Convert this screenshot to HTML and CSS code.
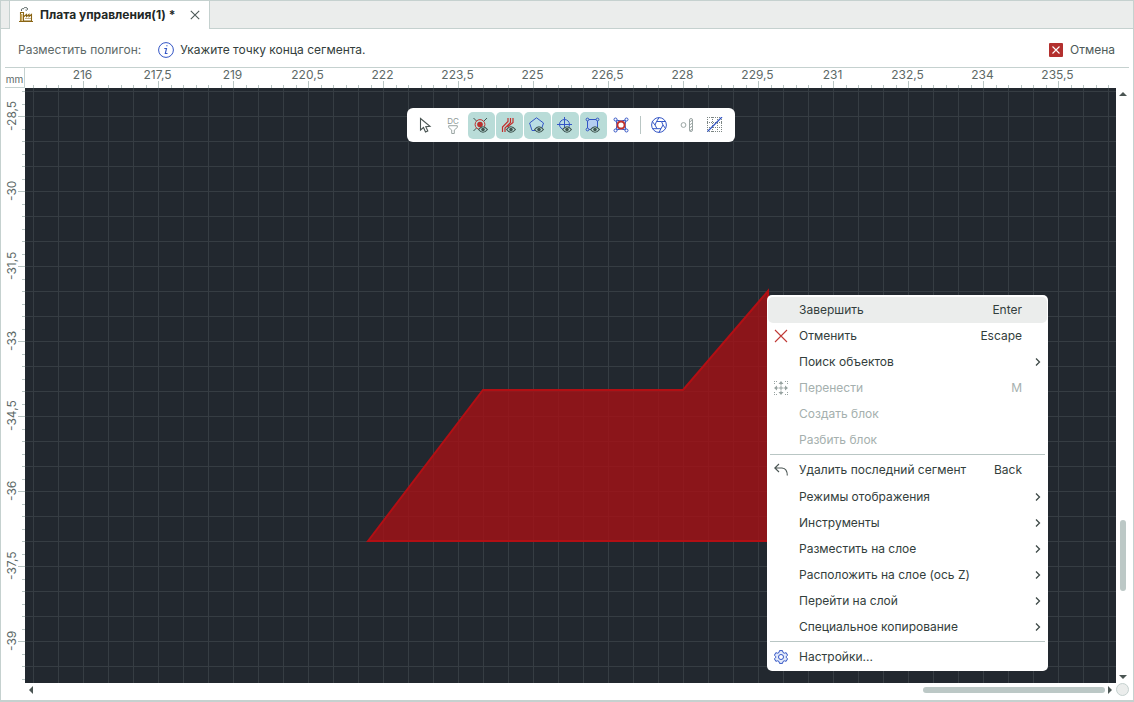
FILE: index.html
```html
<!DOCTYPE html>
<html lang="ru">
<head>
<meta charset="utf-8">
<title>Плата управления(1)</title>
<link rel="stylesheet" href="styles.css">
</head>
<body>
<svg class="defs" aria-hidden="true">
  <symbol id="eye" viewBox="0 0 10 7"><path d="M.6 3.500Q5-2 9.400 3.500Q5 9 .6 3.500Z" fill="#b9dcd8" stroke="#3f5550" stroke-width="1.200"/><circle cx="5" cy="3.500" r="1.800" fill="#3f5550"/></symbol>
  <symbol id="chev" viewBox="0 0 6 8"><path d="M1 .5 4.500 4 1 7.500" fill="none" stroke="#3f4a48" stroke-width="1.300"/></symbol>
</svg>
<div class="window">
  <header class="tabs">
    <div class="tab">
      <svg class="tab-icon" viewBox="0 0 16 16" fill="none">
        <path d="M1 14.500H15M2.500 14V5.500H5.500V14M5.500 14H13.500V7.500L11 9.500V7.500L8.500 9.500V7.500L6 9.500" stroke="#8a6514" stroke-width="1.100"/>
        <path d="M2.500 7h2v7h-2z" fill="#c9a95c"/>
        <path d="M7.500 11.500h1m1 0h1m1 0h1" stroke="#8a6514"/>
        <path d="M3.500 4C3 2 4 1.300 5.500 1.800 5.500.2 9.500-.2 9.500 2 9.500 3 8.500 3.700 7.500 3" stroke="#4d5a58"/>
      </svg>
      <span class="tab-title">Плата управления(1) *</span>
      <button class="close" aria-label="Закрыть"><svg viewBox="0 0 10 10"><path d="M.8.800 9.200 9.200M9.200.800.8 9.200" stroke="#4d5a58" stroke-width="1.100"/></svg></button>
    </div>
  </header>
  <div class="prompt">
    <span class="mode">Разместить полигон:</span>
    <svg class="info" viewBox="0 0 16 16" fill="none" stroke="#3355c5"><circle cx="8" cy="8" r="7.400"/><path d="M6.300 6.500H8.500L7.300 11.500H9.500M8.300 3.700h1.200" stroke-width="1.100"/></svg>
    <span class="hint">Укажите точку конца сегмента.</span>
    <button class="cancel"><svg viewBox="0 0 14 14"><rect width="14" height="14" rx="1" fill="#b3302e"/><path d="M3.500 3.500l7 7M10.500 3.500l-7 7" stroke="#fff" stroke-width="1.100"/></svg>Отмена</button>
  </div>
  <main class="board">
    <div class="unit">mm</div>
    <div class="ruler-x">
      <span>216</span><span>217,5</span><span>219</span><span>220,5</span><span>222</span><span>223,5</span><span>225</span><span>226,5</span><span>228</span><span>229,5</span><span>231</span><span>232,5</span><span>234</span><span>235,5</span>
      <svg class="ticks"><defs><pattern id="tx" x="-17" width="75" height="20" patternUnits="userSpaceOnUse"><path d="M.5 13v7M13.500 17v3M25.500 17v3M38.500 17v3M50.500 17v3M63.500 17v3" stroke="#b9c6c4"/></pattern></defs><rect width="100%" height="100%" fill="url(#tx)"/></svg>
    </div>
    <div class="corner"></div>
    <div class="ruler-y">
      <span>-28,5</span><span>-30</span><span>-31,5</span><span>-33</span><span>-34,5</span><span>-36</span><span>-37,5</span><span>-39</span>
      <svg class="ticks"><defs><pattern id="ty" y="-47" width="20" height="75" patternUnits="userSpaceOnUse"><path d="M13 .5h7M17 13.500h3M17 25.500h3M17 38.500h3M17 50.500h3M17 63.500h3" stroke="#b9c6c4"/></pattern></defs><rect width="100%" height="100%" fill="url(#ty)"/></svg>
    </div>
    <div class="canvas">
      <svg class="drawing">
        <defs><pattern id="grid" x="8" y="3" width="25" height="25" patternUnits="userSpaceOnUse"><path d="M.5 0V25M0 .5H25" stroke="#363d43"/></pattern></defs>
        <rect width="100%" height="100%" fill="url(#grid)"/>
        <path d="M343 453 458 302H658L743 203V453Z" fill="#a61015" fill-opacity=".8" stroke="#b20f14" stroke-width="2"/>
      </svg>
      <div class="toolbar" role="toolbar">
        <button class="tool" aria-label="Выбор"><svg viewBox="0 0 16 16"><path d="M3.500 1.500V13L6.500 10.500 8.500 15 10.800 14 8.800 9.700 13 9.300Z" fill="#fff" stroke="#4a5553" stroke-width="1.100"/></svg></button>
        <button class="tool dc" aria-label="DC фильтр"><span>DC</span><svg viewBox="0 0 10 9"><path d="M.7.700H9.300V2.500L6.300 5V8.500H3.700V5L.7 2.500Z" fill="none" stroke="#9aa5a3"/></svg></button>
        <button class="tool on" aria-label="Площадки"><svg viewBox="0 0 16 16"><path d="M.5 1l3 3M14 1l-3 3M.5 14l3-3" stroke="#3f5550"/><circle cx="7" cy="7.500" r="4.900" fill="none" stroke="#c22f2c"/><circle cx="7" cy="7.500" r="2.800" fill="#b9302e"/><use href="#eye" x="5" y="9" width="10" height="7"/></svg></button>
        <button class="tool on" aria-label="Проводники"><svg viewBox="0 0 16 16"><path d="M1.500 15V10L7 4.500V1M4 15V11L9.500 5.500V1M6.500 10 12 5.500V1" fill="none" stroke="#c22f2c" stroke-width="1.200"/><use href="#eye" x="5" y="9" width="10" height="7"/></svg></button>
        <button class="tool on" aria-label="Полигоны"><svg viewBox="0 0 16 16"><path d="M7.500.8 14.500 6 12 13.500H3L.6 6Z" fill="#b9dde4" stroke="#3355c5"/><use href="#eye" x="5" y="9" width="10" height="7"/></svg></button>
        <button class="tool on" aria-label="Отверстия"><svg viewBox="0 0 16 16"><circle cx="7.500" cy="7.500" r="5" fill="#b9dde4" stroke="#3355c5"/><path d="M7.500 0V15M0 7.500H15" stroke="#3355c5"/><use href="#eye" x="5" y="9" width="10" height="7"/></svg></button>
        <button class="tool on" aria-label="Области"><svg viewBox="0 0 16 16"><path d="M2.500 2.500H12.500V12.500H2.500Z" fill="#b5cdf0" stroke="#3355c5"/><g fill="#b9dcd8" stroke="#3355c5"><circle cx="2.500" cy="2.500" r="1.400"/><circle cx="12.500" cy="2.500" r="1.400"/><circle cx="2.500" cy="12.500" r="1.400"/></g><use href="#eye" x="5" y="9" width="10" height="7"/></svg></button>
        <button class="tool" aria-label="Привязка"><svg viewBox="0 0 16 16" fill="none"><path d="M3 3Q8 5 13 3Q11 8 13 13Q8 11 3 13Q5 8 3 3Z" fill="#c5d2f2" stroke="#3355c5"/><g fill="#fff" stroke="#3355c5"><circle cx="2.500" cy="2.500" r="1.500"/><circle cx="13.500" cy="2.500" r="1.500"/><circle cx="2.500" cy="13.500" r="1.500"/><circle cx="13.500" cy="13.500" r="1.500"/></g><circle cx="8" cy="8" r="3.600" fill="#fff" stroke="#c0302d" stroke-width="2"/></svg></button>
        <i class="tool-sep"></i>
        <button class="tool" aria-label="Диафрагма"><svg viewBox="0 0 16 16" fill="none" stroke="#3355c5"><circle cx="8" cy="8" r="7.400"/><path d="M5.500 4.500H10.500L12 8 10 11.700H6L4 8ZM5.500 4.500 8 .7M10.500 4.500 14.300 4.500M12 8 14.500 11.500M10 11.700 8 15.300M6 11.700H1.700M4 8 1.300 4.500"/></svg></button>
        <button class="tool" aria-label="Зазор"><svg viewBox="0 0 16 16" fill="none" stroke="#9aa5a3"><circle cx="4.500" cy="8" r="2.400"/><rect x="10.500" y="1.500" width="3" height="13" rx="1.500"/><path d="M10.500 5l3-2M10.500 8l3-2M10.500 11l3-2M10.500 14l3-2"/></svg></button>
        <button class="tool" aria-label="Сетка"><svg viewBox="0 0 16 16" fill="none"><path d="M0 .5H16M0 14.500H16M.5 0V16M14.500 0V16M0 5.500H16M0 10.500H16M5.500 0V16M10.500 0V16" stroke="#7b8583" stroke-dasharray="1 1"/><path d="M.5 14.500 15 0" stroke="#3355c5" stroke-width="1.300"/></svg></button>
      </div>
      <div class="menu" role="menu">
        <button class="item current" role="menuitem"><span class="icon"></span><span>Завершить</span><kbd>Enter</kbd></button>
        <button class="item" role="menuitem"><span class="icon"><svg viewBox="0 0 14 14"><path d="M1 1l12 12M13 1 1 13" stroke="#c03a36" stroke-width="1.100"/></svg></span><span>Отменить</span><kbd>Escape</kbd></button>
        <button class="item" role="menuitem"><span class="icon"></span><span>Поиск объектов</span><svg class="more"><use href="#chev"/></svg></button>
        <button class="item" role="menuitem" disabled><span class="icon"><svg viewBox="0 0 14 14" fill="none" stroke="#98a3a1"><path d="M0 .5h1m1 0h1m8 0h1m1 0h1M0 13.500h1m1 0h1m8 0h1m1 0h1M0 2.500h1m12 0h1M0 11.500h1m12 0h1"/><path d="M7 2v2.500M7 9.500V12M2 7h2.500M9.500 7H12"/><path d="M7 0 9.500 3h-5zM7 14l2.500-3h-5zM0 7l3-2.500v5zM14 7l-3-2.500v5z" fill="#98a3a1" stroke="none"/><path d="M6 6h2v2H6z"/></svg></span><span>Перенести</span><kbd>M</kbd></button>
        <button class="item" role="menuitem" disabled><span class="icon"></span><span>Создать блок</span></button>
        <button class="item" role="menuitem" disabled><span class="icon"></span><span>Разбить блок</span></button>
        <hr>
        <button class="item tall" role="menuitem"><span class="icon"><svg viewBox="0 0 14 14" fill="none" stroke="#4a5553" stroke-width="1.100"><path d="M5 1 .8 5 5 9M.8 5H8Q13.300 5.500 13.300 12.500"/></svg></span><span>Удалить последний сегмент</span><kbd>Back</kbd></button>
        <button class="item" role="menuitem"><span class="icon"></span><span>Режимы отображения</span><svg class="more"><use href="#chev"/></svg></button>
        <button class="item" role="menuitem"><span class="icon"></span><span>Инструменты</span><svg class="more"><use href="#chev"/></svg></button>
        <button class="item" role="menuitem"><span class="icon"></span><span>Разместить на слое</span><svg class="more"><use href="#chev"/></svg></button>
        <button class="item" role="menuitem"><span class="icon"></span><span>Расположить на слое (ось Z)</span><svg class="more"><use href="#chev"/></svg></button>
        <button class="item" role="menuitem"><span class="icon"></span><span>Перейти на слой</span><svg class="more"><use href="#chev"/></svg></button>
        <button class="item" role="menuitem"><span class="icon"></span><span>Специальное копирование</span><svg class="more"><use href="#chev"/></svg></button>
        <hr>
        <button class="item" role="menuitem"><span class="icon"><svg viewBox="0 0 14 14" fill="#e3eafa" stroke="#3355c5"><path d="M5.500.6H8.500L9 2.500 10.300 3.200 12.200 2.700 13.600 5.300 12.200 6.500V7.500L13.600 8.700 12.200 11.300 10.300 10.800 9 11.500 8.500 13.400H5.500L5 11.500 3.700 10.800 1.800 11.300.4 8.700 1.800 7.500V6.500L.4 5.300 1.800 2.700 3.700 3.200 5 2.500Z"/><circle cx="7" cy="7" r="2.500" fill="#fff"/></svg></span><span>Настройки...</span></button>
      </div>
    </div>
    <div class="scroll-y">
      <svg class="up" viewBox="0 0 8 4"><path d="M0 4 4 0 8 4Z"/></svg><i class="thumb"></i><svg class="down" viewBox="0 0 8 4"><path d="M0 0 4 4 8 0Z"/></svg>
    </div>
    <div class="scroll-x">
      <svg class="left" viewBox="0 0 4 8"><path d="M4 0 0 4 4 8Z"/></svg><i class="thumb"></i><svg class="right" viewBox="0 0 4 8"><path d="M0 0 4 4 0 8Z"/></svg>
    </div>
    <div class="knob"></div>
  </main>
</div>
</body>
</html>
```
FILE: styles.css
```css
* { box-sizing: border-box; }
body { margin: 0; font: 12px/16px Inter, "Noto Sans", sans-serif; color: #333e3c; background: #fff; }
button { font: inherit; color: inherit; background: none; border: 0; padding: 0; margin: 0; }
svg { display: block; flex: none; }
.defs { position: absolute; width: 0; height: 0; }
.window { min-height: 100vh; display: flex; flex-direction: column; border: 1px solid #c5d1cf; border-bottom-width: 2px; }

.tabs { display: flex; height: 28px; padding-left: 8px; background: #ebedec; box-shadow: inset 0 -1px #c5d1cf; }
.tab { display: flex; align-items: center; padding: 0 9px 0 8px; background: #fff; border: solid #c5d1cf; border-width: 0 1px; }
.tab-icon { width: 16px; height: 16px; }
.tab-title { margin-left: 6px; font-weight: 700; color: #1f2826; }
.close { margin-left: 15px; }
.close svg { width: 10px; height: 10px; }

.prompt { display: flex; align-items: center; height: 39px; margin: 0 4px; padding: 4px 14px 0 13px; border-bottom: 1px solid #c5d1cf; }
.mode { color: #5d6967; }
.info { width: 16px; height: 16px; margin: 0 6px 0 17px; }
.cancel { display: flex; align-items: center; gap: 7px; margin-left: auto; color: #4d5a58; }
.cancel svg { width: 14px; height: 14px; }

.board { flex: 1; display: grid; grid-template-columns: 20px minmax(0, 1fr) 17px; grid-template-rows: 20px minmax(0, 1fr) 17px; padding-left: 4px; color: #5d6967; }
.unit { display: flex; align-items: center; justify-content: center; font-size: 10px; border: solid #c5d1cf; border-width: 0 1px 1px 0; padding-top: 2px; }
.ruler-x { position: relative; display: flex; padding-left: 20px; overflow: hidden; line-height: 14px; }
.ruler-x span { flex: 0 0 75px; text-align: center; }
.ticks { position: absolute; inset: 0; width: 100%; height: 100%; }
.ruler-y { position: relative; }
.ruler-y span { display: flex; align-items: center; justify-content: center; height: 75px; width: 14px; writing-mode: vertical-rl; transform: rotate(180deg); }
.ruler-y span:first-child { margin-top: -10px; }
.canvas { position: relative; overflow: hidden; background: #22282f; }
.drawing { position: absolute; width: 100%; height: 100%; }

.toolbar { position: absolute; top: 20px; left: 50%; transform: translateX(-50%); display: flex; align-items: center; gap: 1px; height: 34px; padding: 0 6px 0 5px; background: #fff; border-radius: 6px; }
.tool { display: flex; flex-direction: column; align-items: center; justify-content: center; width: 27px; height: 27px; border-radius: 5px; }
.tool svg { width: 16px; height: 16px; }
.on { background: #b9dcd8; }
.dc { font-size: 8px; line-height: 8px; color: #8c9795; }
.tool.dc svg { width: 10px; height: 9px; }
.tool-sep { width: 1px; height: 18px; margin: 0 4px; background: #b9c6c4; }

.menu { position: absolute; left: 742px; top: 207px; width: 281px; padding: 2px 1px 1px; background: #fff; border-radius: 5px; color: #333e3c; }
.item { display: flex; align-items: center; width: 100%; height: 26px; padding: 0 6px; border-radius: 5px; text-align: left; white-space: nowrap; }
.tall { height: 27px; padding-bottom: 1px; }
.current { background: #ebedec; }
.icon { width: 14px; margin-right: 11px; }
.icon svg { width: 14px; height: 14px; }
.item:disabled { color: #a5b0ae; }
kbd { font: inherit; margin-left: auto; padding-right: 19px; }
.more { width: 6px; height: 8px; margin-left: auto; }
.menu hr { height: 4px; margin: 0 2px; border: 0; background: linear-gradient(#b9c6c4, #b9c6c4) 0 1px / 100% 1px no-repeat; }

.scroll-y, .scroll-x { display: flex; align-items: center; fill: #4a5553; }
.scroll-y { flex-direction: column; padding: 4px 4px 4px 0; }
.scroll-x { grid-column: 1 / 3; padding: 0 4px 4px; margin-left: 20px; }
.thumb { background: #bcc8c6; border-radius: 3px; }
.up, .down { width: 8px; height: 4px; }
.left, .right { width: 4px; height: 8px; }
.scroll-y .thumb { width: 6px; height: 71px; margin: auto 0 84px; }
.scroll-x .thumb { width: 182px; height: 6px; margin: 0 3px 0 auto; }
.knob { width: 13px; height: 13px; border: 1px solid #c5d1cf; border-radius: 50%; background: #ebedec; }
```
